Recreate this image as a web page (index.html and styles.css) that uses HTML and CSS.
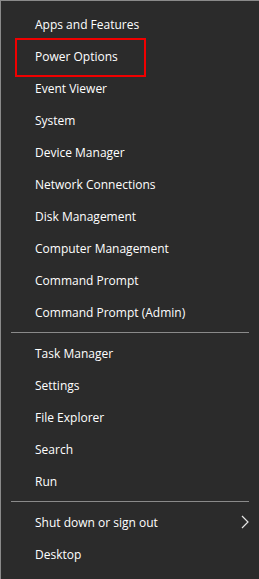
FILE: index.html
```html
<!DOCTYPE html>
<html>
<head>
<meta charset="utf-8">
<link rel="stylesheet" href="styles.css">
</head>
<body>
<div class="menu">
  <div class="group">
    <div class="item">Apps and Features</div>
    <div class="item highlighted">Power Options</div>
    <div class="item">Event Viewer</div>
    <div class="item">System</div>
    <div class="item">Device Manager</div>
    <div class="item">Network Connections</div>
    <div class="item">Disk Management</div>
    <div class="item">Computer Management</div>
    <div class="item">Command Prompt</div>
    <div class="item">Command Prompt (Admin)</div>
  </div>
  <div class="sep"></div>
  <div class="group">
    <div class="item">Task Manager</div>
    <div class="item">Settings</div>
    <div class="item">File Explorer</div>
    <div class="item">Search</div>
    <div class="item">Run</div>
  </div>
  <div class="sep"></div>
  <div class="group">
    <div class="item sub">Shut down or sign out
      <svg class="chev" width="8" height="14" viewBox="0 0 8 14"><path d="M1 1 L7 7 L1 13" fill="none" stroke="#e6e6e6" stroke-width="1.2"/></svg>
    </div>
    <div class="item">Desktop</div>
  </div>
</div>
</body>
</html>
```
FILE: styles.css
```css
html, body {
  margin: 0;
  padding: 0;
  background: #2b2b2b;
}
.menu {
  width: 258px;
  height: 571px;
  background: #2b2b2b;
  border-top: 1px solid #8a8a8a;
  border-left: 1px solid #8a8a8a;
  padding-top: 7px;
  box-sizing: content-box;
  font-family: "Open Sans", "Noto Sans", sans-serif;
  font-size: 12px;
  color: #ffffff;
}
.group {
  display: flex;
  flex-direction: column;
}
.item {
  height: 32px;
  display: flex;
  align-items: center;
  padding-left: 34px;
  padding-right: 10px;
  position: relative;
}
.item.highlighted::after {
  content: "";
  position: absolute;
  left: 14px;
  top: -2px;
  width: 127px;
  height: 35px;
  border: 2px solid #f00000;
}
.item.sub {
  justify-content: space-between;
}
.chev {
  display: block;
}
.sep {
  height: 9px;
  display: flex;
  align-items: center;
  padding-left: 10px;
  padding-right: 10px;
}
.sep::before {
  content: "";
  display: block;
  width: 238px;
  height: 1px;
  background: #8a8a8a;
}
```
